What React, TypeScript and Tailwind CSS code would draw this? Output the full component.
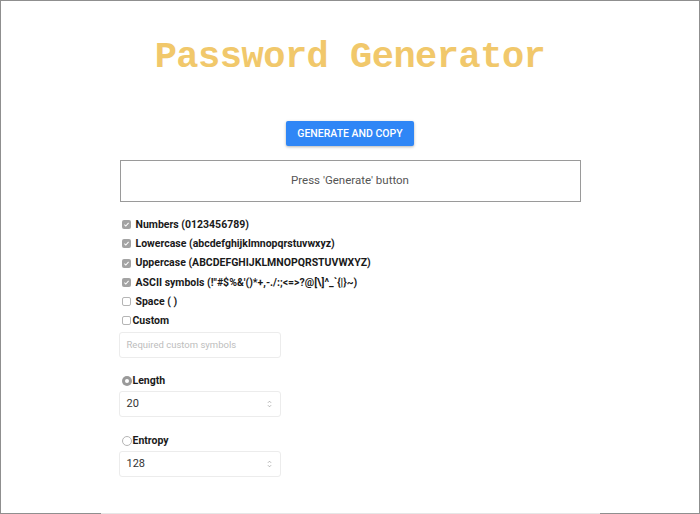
import { useState } from 'react';

const options = [
  { label: 'Numbers (0123456789)', checked: true },
  { label: 'Lowercase (abcdefghijklmnopqrstuvwxyz)', checked: true },
  { label: 'Uppercase (ABCDEFGHIJKLMNOPQRSTUVWXYZ)', checked: true },
  { label: 'ASCII symbols (!"#$%&\'()*+,-./:;<=>?@[\\]^_`{|}~)', checked: true },
  { label: 'Space ( )', checked: false },
];

function Box({ checked }: { checked: boolean }) {
  return (
    <span
      className={`w-[9px] h-[9px] rounded-[2px] shrink-0 flex items-center justify-center ${
        checked ? 'bg-[#a3a3a3]' : 'bg-white border border-[#b5b5b5]'
      }`}
    >
      {checked && (
        <svg viewBox="0 0 10 10" className="w-[7px] h-[7px]">
          <path d="M2 5.2l2 2 4-4.4" fill="none" stroke="white" strokeWidth="1.5" />
        </svg>
      )}
    </span>
  );
}

function NumberInput({ value }: { value: string }) {
  return (
    <div className="w-[162px] h-[26px] border border-[#ececec] rounded-[3px] flex items-center justify-between pl-[7px] pr-[8px]">
      <span className="text-[11px] text-[#333]">{value}</span>
      <svg viewBox="0 0 6 10" className="w-[5px] h-[8px]">
        <path d="M1 3.5l2-2 2 2M1 6.5l2 2 2-2" fill="none" stroke="#999" strokeWidth="0.9" />
      </svg>
    </div>
  );
}

export default function App() {
  const [mode] = useState<'length' | 'entropy'>('length');

  return (
    <div className="w-[700px] h-[514px] bg-white border border-[#8f8f8f] border-b-0 flex flex-col items-center font-['Roboto',sans-serif] relative overflow-hidden">
      <h1 className="mt-[30px] h-[52px] leading-[52px] text-[37px] font-bold text-[#f1c86b] font-['Liberation_Mono',monospace] tracking-[-0.5px]">
        Password Generator
      </h1>

      <button className="mt-[38px] h-[25px] px-[11px] bg-[#2f86f6] text-white text-[10.5px] font-medium uppercase rounded-[2px] shadow-[0_1px_3px_rgba(0,0,0,0.3)]">
        Generate and copy
      </button>

      <div className="mt-[14px] w-[461px] h-[42px] border border-[#9a9a9a] flex items-center justify-center text-[11.5px] text-[#555]">
        Press 'Generate' button
      </div>

      <div className="w-[461px] mt-[16px] flex flex-col">
        <div className="flex flex-col gap-[6.3px] pl-[2px]">
          {options.map((o) => (
            <label key={o.label} className="flex items-center gap-[5px] h-[13px] text-[10.5px] font-bold text-[#1a1a1a]">
              <Box checked={o.checked} />
              {o.label}
            </label>
          ))}
          <label className="flex items-center gap-[2px] h-[13px] text-[10.5px] font-bold text-[#1a1a1a]">
            <Box checked={false} />
            Custom
          </label>
        </div>

        <div className="mt-[5px] -ml-px w-[162px] h-[26px] border border-[#ececec] rounded-[3px] flex items-center pl-[7px] text-[9.5px] text-[#bdbdbd]">
          Required custom symbols
        </div>

        <label className="mt-[16px] ml-[2px] flex items-center gap-[1px] h-[13px] text-[10.5px] font-bold text-[#1a1a1a]">
          <span className="w-[10px] h-[10px] rounded-full bg-[#9a9a9a] flex items-center justify-center">
            {mode === 'length' && <span className="w-[4px] h-[4px] rounded-full bg-white" />}
          </span>
          Length
        </label>
        <div className="mt-[4px] -ml-px">
          <NumberInput value="20" />
        </div>

        <label className="mt-[17px] ml-[2px] flex items-center gap-[1px] h-[13px] text-[10.5px] font-bold text-[#1a1a1a]">
          <span className="w-[10px] h-[10px] rounded-full border border-[#b5b5b5] bg-white" />
          Entropy
        </label>
        <div className="mt-[4px] -ml-px">
          <NumberInput value="128" />
        </div>
      </div>

      <div className="absolute bottom-0 left-0 right-0 h-px flex">
        <div className="w-[100px] bg-[#8f8f8f]" />
        <div className="w-[499px] bg-[#e6e6e6]" />
        <div className="flex-1 bg-[#8f8f8f]" />
      </div>
    </div>
  );
}
